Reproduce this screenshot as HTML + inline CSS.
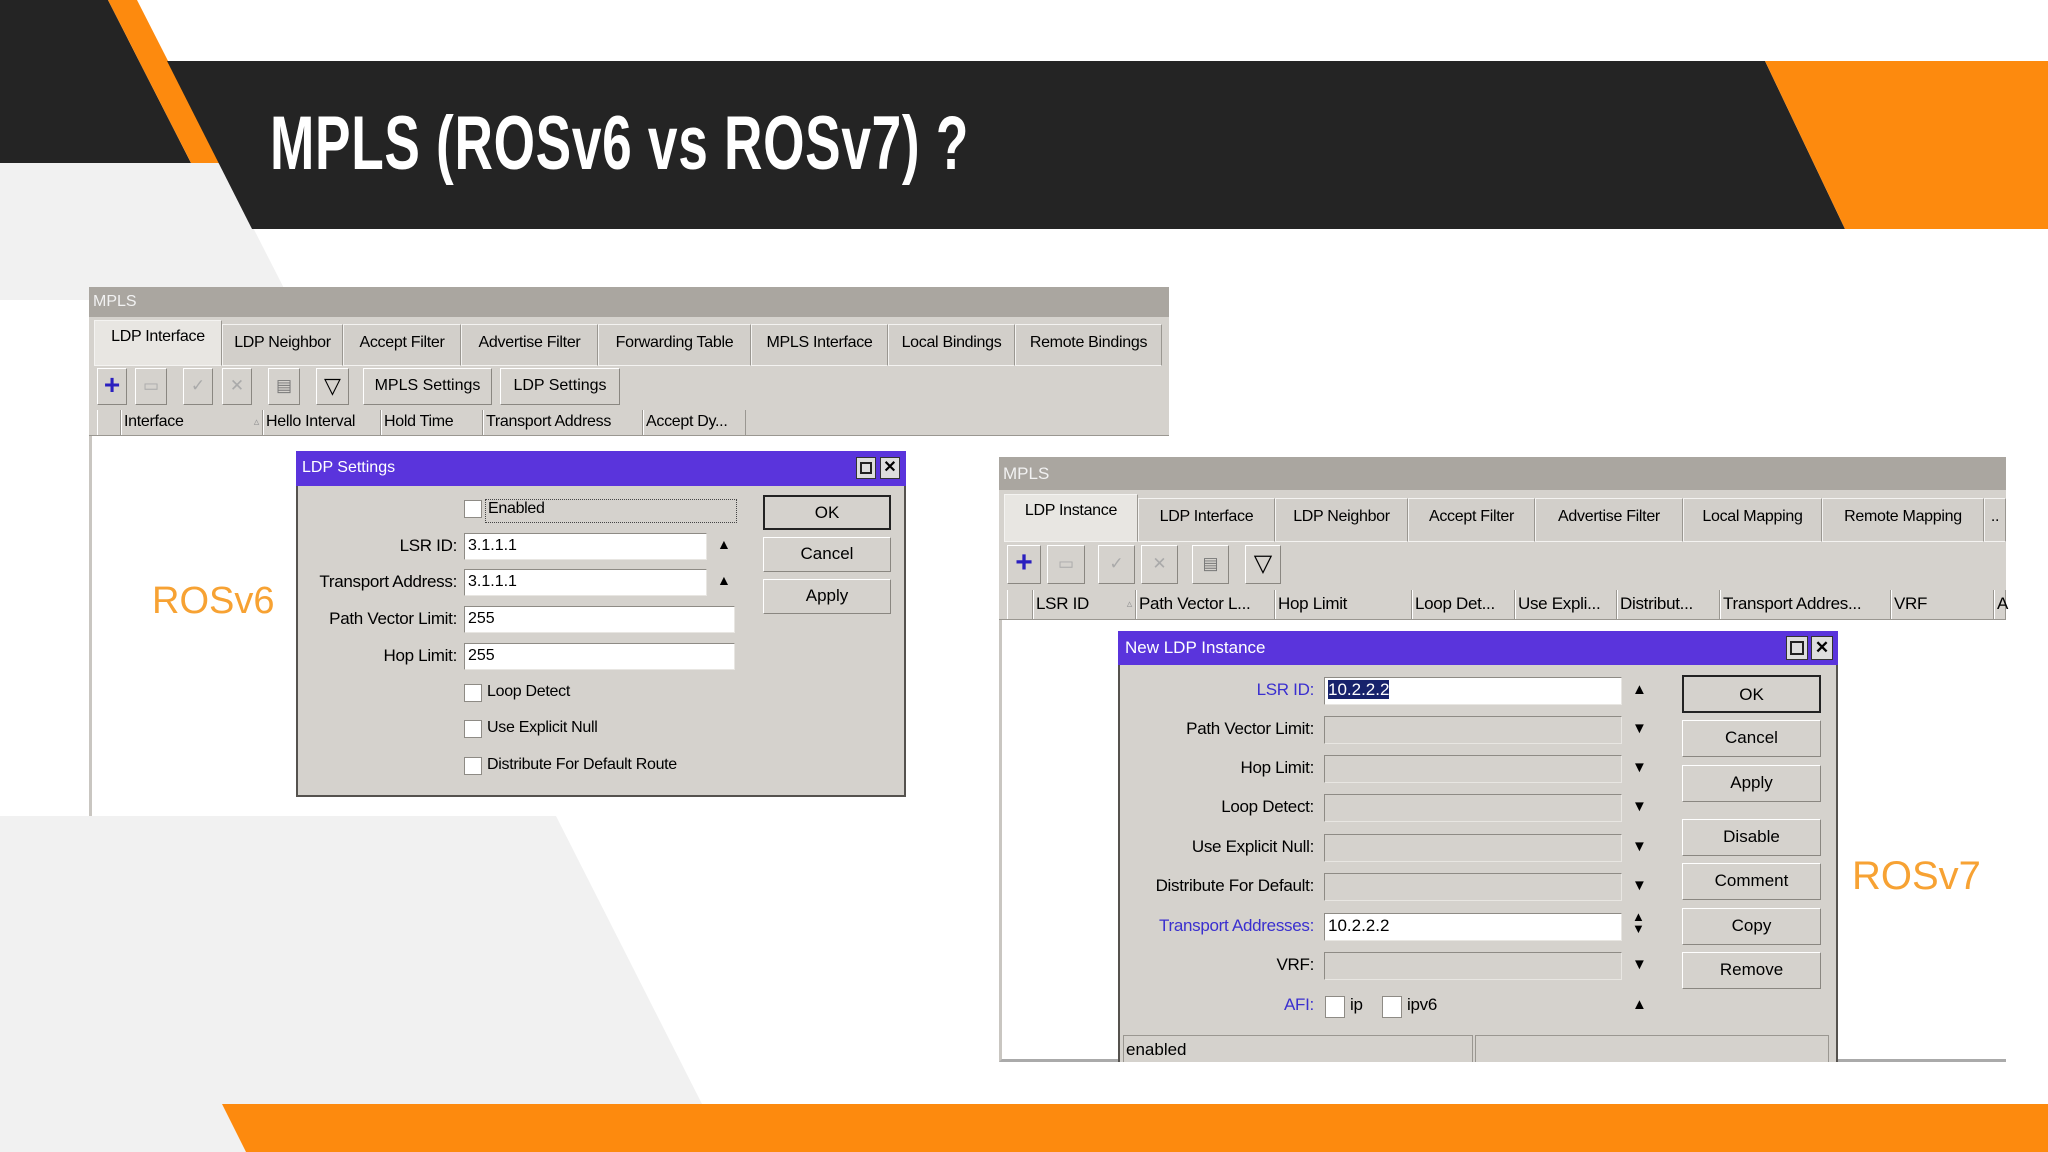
<!DOCTYPE html>
<html><head><meta charset="utf-8"><style>
*{margin:0;padding:0;box-sizing:border-box}
body{width:2048px;height:1152px;position:relative;overflow:hidden;background:#fff;font-family:"Liberation Sans",sans-serif;}
.a{position:absolute}
.win{background:#d5d2cd;font-size:16px;color:#000;white-space:nowrap}
.t{position:absolute;font-size:16px;color:#000;white-space:nowrap;letter-spacing:-0.3px}
.tab{position:absolute;border:1px solid #f4f3f1;border-right-color:#9a9791;background:#d2cfca;text-align:center;font-size:16px;letter-spacing:-0.3px;padding-top:9px}
.tab.act{background:#e8e6e2;padding-top:7px}
.btn{position:absolute;border:1px solid #fff;border-right-color:#8a8781;border-bottom-color:#8a8781;background:#d5d2cd;text-align:center;font-size:17px}
.inp{position:absolute;background:#fff;border:1px solid #8e8b85;border-right-color:#e8e6e2;border-bottom-color:#e8e6e2;font-size:16px;padding-left:3px;line-height:24px}
.inpg{background:#d5d2cd}
.hd{position:absolute;border-left:1px solid #fff;border-right:1px solid #9a9791;font-size:16px;padding-left:2px;line-height:24px;letter-spacing:-0.3px}
.cb{position:absolute;width:18px;height:18px;background:#fff;border:1px solid #8e8b85}
.lbl{position:absolute;text-align:right;font-size:17px;letter-spacing:-0.3px}
.blue{color:#3a2fcf}
</style></head><body>
<svg class="a" style="left:0;top:0" width="2048" height="1152">
<polygon points="0,163 220,163 290,300 0,300" fill="#f1f1f1"/>
<polygon points="0,816 556,816 702,1104 0,1104" fill="#f1f1f1"/>
<polygon points="0,1104 222,1104 246,1152 0,1152" fill="#f1f1f1"/>
<polygon points="0,0 108,0 191,163 0,163" fill="#242424"/>
<polygon points="108,0 137,0 220,163 191,163" fill="#fd8a0e"/>
<polygon points="167,61 1765,61 1845,229 252,229" fill="#242424"/>
<polygon points="1765,61 2048,61 2048,229 1845,229" fill="#fd8a0e"/>
<polygon points="222,1104 2048,1104 2048,1152 246,1152" fill="#fd8a0e"/>
</svg>
<div class="a" style="left:270px;top:100px;font-size:76px;font-weight:bold;color:#fff;transform:scaleX(0.70);transform-origin:left top;white-space:nowrap;letter-spacing:1px">MPLS (ROSv6 vs ROSv7) ?</div>

<!-- ROSv6 window -->
<div class="a win" style="left:89px;top:287px;width:1080px;height:529px;background:#fff;border-left:3px solid #c9c6c1">
</div>
<div class="a" style="left:89px;top:287px;width:1080px;height:30px;background:#aaa6a0;color:#f2f2f2;font-size:16px;padding:6px 4px">MPLS</div>
<div class="a" style="left:89px;top:317px;width:1080px;height:119px;background:#d5d2cd;border-bottom:1px solid #9a9791"></div>
<div class="tab act" style="left:94px;top:320px;width:128px;height:46px">LDP Interface</div>
<div class="tab" style="left:222px;top:324px;width:121px;height:42px">LDP Neighbor</div>
<div class="tab" style="left:343px;top:324px;width:118px;height:42px">Accept Filter</div>
<div class="tab" style="left:461px;top:324px;width:137px;height:42px">Advertise Filter</div>
<div class="tab" style="left:598px;top:324px;width:153px;height:42px">Forwarding Table</div>
<div class="tab" style="left:751px;top:324px;width:137px;height:42px">MPLS Interface</div>
<div class="tab" style="left:888px;top:324px;width:127px;height:42px">Local Bindings</div>
<div class="tab" style="left:1015px;top:324px;width:147px;height:42px">Remote Bindings</div>
<div class="btn" style="left:97px;top:368px;width:30px;height:37px;color:#2a1fbf;font-size:28px;font-weight:bold;line-height:32px">+</div>
<div class="btn" style="left:135px;top:368px;width:32px;height:37px;color:#aaa;line-height:34px">▭</div>
<div class="btn" style="left:183px;top:368px;width:30px;height:37px;color:#aaa;line-height:34px">✓</div>
<div class="btn" style="left:222px;top:368px;width:30px;height:37px;color:#aaa;line-height:34px">✕</div>
<div class="btn" style="left:268px;top:368px;width:32px;height:37px;color:#777;line-height:34px">▤</div>
<div class="btn" style="left:316px;top:368px;width:33px;height:37px;line-height:34px;font-size:22px">▽</div>
<div class="btn" style="left:363px;top:368px;width:129px;height:37px;line-height:34px;font-size:16px">MPLS Settings</div>
<div class="btn" style="left:500px;top:368px;width:120px;height:37px;line-height:34px;font-size:16px">LDP Settings</div>
<div class="hd" style="left:97px;top:410px;width:24px;height:25px"></div>
<div class="hd" style="left:121px;top:410px;width:142px;height:25px">Interface<span style="float:right;color:#999;font-size:11px;padding-right:3px">▵</span></div>
<div class="hd" style="left:263px;top:410px;width:118px;height:25px">Hello Interval</div>
<div class="hd" style="left:381px;top:410px;width:102px;height:25px">Hold Time</div>
<div class="hd" style="left:483px;top:410px;width:160px;height:25px">Transport Address</div>
<div class="hd" style="left:643px;top:410px;width:103px;height:25px">Accept Dy...</div>
<div class="a" style="left:152px;top:580px;font-size:38px;color:#f7a233">ROSv6</div>

<!-- LDP Settings dialog -->
<div class="a win" style="left:296px;top:451px;width:610px;height:346px;border:2px solid #55524e;border-top:none"></div>
<div class="a" style="left:296px;top:451px;width:610px;height:35px;background:#5a34dc;color:#fff;font-size:16px;padding:8px 6px">LDP Settings
<span style="position:absolute;right:30px;top:6px;width:20px;height:22px;border:1px solid #333;background:#ddd"><span style="position:absolute;left:3px;top:4px;width:12px;height:12px;border:2px solid #222"></span></span>
<span style="position:absolute;right:6px;top:6px;width:20px;height:22px;border:1px solid #333;background:#ddd;color:#000;font-weight:bold;text-align:center;line-height:20px">✕</span></div>
<div class="cb" style="left:464px;top:500px"></div><div class="t" style="left:485px;top:499px;border:1px dotted #444;width:252px;height:24px;padding-left:2px">Enabled</div>
<div class="lbl" style="left:296px;top:536px;width:161px">LSR ID:</div><div class="inp" style="left:464px;top:533px;width:243px;height:27px">3.1.1.1</div><div class="t" style="left:717px;top:536px;font-size:14px">▲</div>
<div class="lbl" style="left:296px;top:572px;width:161px">Transport Address:</div><div class="inp" style="left:464px;top:569px;width:243px;height:27px">3.1.1.1</div><div class="t" style="left:717px;top:572px;font-size:14px">▲</div>
<div class="lbl" style="left:296px;top:609px;width:161px">Path Vector Limit:</div><div class="inp" style="left:464px;top:606px;width:271px;height:27px">255</div>
<div class="lbl" style="left:296px;top:646px;width:161px">Hop Limit:</div><div class="inp" style="left:464px;top:643px;width:271px;height:27px">255</div>
<div class="cb" style="left:464px;top:684px"></div><div class="t" style="left:487px;top:683px">Loop Detect</div>
<div class="cb" style="left:464px;top:720px"></div><div class="t" style="left:487px;top:719px">Use Explicit Null</div>
<div class="cb" style="left:464px;top:757px"></div><div class="t" style="left:487px;top:756px">Distribute For Default Route</div>
<div class="btn" style="left:763px;top:495px;width:128px;height:35px;line-height:32px;border:2px solid #222">OK</div>
<div class="btn" style="left:763px;top:537px;width:128px;height:35px;line-height:32px">Cancel</div>
<div class="btn" style="left:763px;top:579px;width:128px;height:35px;line-height:32px">Apply</div>

<!-- ROSv7 window -->
<div class="a" style="left:999px;top:457px;width:1007px;height:605px;background:#fff;border-left:3px solid #c9c6c1;border-bottom:3px solid #aaa"></div>
<div class="a" style="left:999px;top:457px;width:1007px;height:33px;background:#aaa6a0;color:#f2f2f2;font-size:17px;padding:7px 4px">MPLS</div>
<div class="a" style="left:999px;top:490px;width:1007px;height:130px;background:#d5d2cd;border-bottom:1px solid #9a9791"></div>
<div class="tab act" style="left:1004px;top:494px;width:134px;height:48px">LDP Instance</div>
<div class="tab" style="left:1138px;top:498px;width:137px;height:44px">LDP Interface</div>
<div class="tab" style="left:1275px;top:498px;width:133px;height:44px">LDP Neighbor</div>
<div class="tab" style="left:1408px;top:498px;width:127px;height:44px">Accept Filter</div>
<div class="tab" style="left:1535px;top:498px;width:148px;height:44px">Advertise Filter</div>
<div class="tab" style="left:1683px;top:498px;width:139px;height:44px">Local Mapping</div>
<div class="tab" style="left:1822px;top:498px;width:162px;height:44px">Remote Mapping</div>
<div class="tab" style="left:1984px;top:498px;width:22px;height:44px">..</div>
<div class="btn" style="left:1007px;top:545px;width:34px;height:39px;color:#2a1fbf;font-size:30px;font-weight:bold;line-height:34px">+</div>
<div class="btn" style="left:1047px;top:545px;width:38px;height:39px;color:#aaa;line-height:36px">▭</div>
<div class="btn" style="left:1098px;top:545px;width:37px;height:39px;color:#aaa;line-height:36px">✓</div>
<div class="btn" style="left:1141px;top:545px;width:37px;height:39px;color:#aaa;line-height:36px">✕</div>
<div class="btn" style="left:1192px;top:545px;width:37px;height:39px;color:#777;line-height:36px">▤</div>
<div class="btn" style="left:1245px;top:545px;width:36px;height:39px;line-height:36px;font-size:24px">▽</div>
<div class="hd" style="left:1007px;top:590px;width:26px;height:29px"></div>
<div class="hd" style="left:1033px;top:590px;width:103px;height:29px;line-height:28px;font-size:17px">LSR ID<span style="float:right;color:#999;font-size:11px;padding-right:3px">▵</span></div>
<div class="hd" style="left:1136px;top:590px;width:139px;height:29px;line-height:28px;font-size:17px">Path Vector L...</div>
<div class="hd" style="left:1275px;top:590px;width:137px;height:29px;line-height:28px;font-size:17px">Hop Limit</div>
<div class="hd" style="left:1412px;top:590px;width:103px;height:29px;line-height:28px;font-size:17px">Loop Det...</div>
<div class="hd" style="left:1515px;top:590px;width:102px;height:29px;line-height:28px;font-size:17px">Use Expli...</div>
<div class="hd" style="left:1617px;top:590px;width:103px;height:29px;line-height:28px;font-size:17px">Distribut...</div>
<div class="hd" style="left:1720px;top:590px;width:171px;height:29px;line-height:28px;font-size:17px">Transport Addres...</div>
<div class="hd" style="left:1891px;top:590px;width:103px;height:29px;line-height:28px;font-size:17px">VRF</div>
<div class="hd" style="left:1994px;top:590px;width:12px;height:29px;line-height:28px;font-size:17px">A</div>
<div class="a" style="left:1852px;top:854px;font-size:40px;color:#f7a233">ROSv7</div>

<!-- New LDP Instance -->
<div class="a win" style="left:1118px;top:631px;width:720px;height:431px;border:2px solid #55524e;border-top:none;border-bottom:none"></div>
<div class="a" style="left:1118px;top:631px;width:720px;height:34px;background:#5a34dc;color:#fff;font-size:17px;padding:7px 7px">New LDP Instance
<span style="position:absolute;right:30px;top:5px;width:22px;height:24px;border:1px solid #333;background:#ddd"><span style="position:absolute;left:3px;top:4px;width:14px;height:14px;border:2px solid #222"></span></span>
<span style="position:absolute;right:5px;top:5px;width:22px;height:24px;border:1px solid #333;background:#ddd;color:#000;font-weight:bold;text-align:center;line-height:22px">✕</span></div>
<div class="lbl blue" style="left:1118px;top:680px;width:196px">LSR ID:</div><div class="inp" style="left:1324px;top:677px;width:298px;height:28px;font-size:17px"><span style="background:#17226b;color:#fff">10.2.2.2</span></div><div class="t" style="left:1632px;top:681px;font-size:15px">▲</div>
<div class="lbl" style="left:1118px;top:719px;width:196px">Path Vector Limit:</div><div class="inp inpg" style="left:1324px;top:716px;width:298px;height:28px"></div><div class="t" style="left:1632px;top:720px;font-size:15px">▼</div>
<div class="lbl" style="left:1118px;top:758px;width:196px">Hop Limit:</div><div class="inp inpg" style="left:1324px;top:755px;width:298px;height:28px"></div><div class="t" style="left:1632px;top:759px;font-size:15px">▼</div>
<div class="lbl" style="left:1118px;top:797px;width:196px">Loop Detect:</div><div class="inp inpg" style="left:1324px;top:794px;width:298px;height:28px"></div><div class="t" style="left:1632px;top:798px;font-size:15px">▼</div>
<div class="lbl" style="left:1118px;top:837px;width:196px">Use Explicit Null:</div><div class="inp inpg" style="left:1324px;top:834px;width:298px;height:28px"></div><div class="t" style="left:1632px;top:838px;font-size:15px">▼</div>
<div class="lbl" style="left:1118px;top:876px;width:196px">Distribute For Default:</div><div class="inp inpg" style="left:1324px;top:873px;width:298px;height:28px"></div><div class="t" style="left:1632px;top:877px;font-size:15px">▼</div>
<div class="lbl blue" style="left:1118px;top:916px;width:196px">Transport Addresses:</div><div class="inp" style="left:1324px;top:913px;width:298px;height:28px;font-size:17px">10.2.2.2</div><div class="t" style="left:1632px;top:911px;font-size:13px;line-height:12px">▲<br>▼</div>
<div class="lbl" style="left:1118px;top:955px;width:196px">VRF:</div><div class="inp inpg" style="left:1324px;top:952px;width:298px;height:28px"></div><div class="t" style="left:1632px;top:956px;font-size:15px">▼</div>
<div class="lbl blue" style="left:1118px;top:995px;width:196px">AFI:</div>
<div class="cb" style="left:1325px;top:996px;width:20px;height:22px"></div><div class="t" style="left:1350px;top:995px;font-size:17px">ip</div>
<div class="cb" style="left:1382px;top:996px;width:20px;height:22px"></div><div class="t" style="left:1407px;top:995px;font-size:17px">ipv6</div>
<div class="t" style="left:1632px;top:996px;font-size:15px">▲</div>
<div class="btn" style="left:1682px;top:675px;width:139px;height:38px;line-height:35px;border:2px solid #222">OK</div>
<div class="btn" style="left:1682px;top:720px;width:139px;height:37px;line-height:34px">Cancel</div>
<div class="btn" style="left:1682px;top:765px;width:139px;height:37px;line-height:34px">Apply</div>
<div class="btn" style="left:1682px;top:819px;width:139px;height:37px;line-height:34px">Disable</div>
<div class="btn" style="left:1682px;top:863px;width:139px;height:37px;line-height:34px">Comment</div>
<div class="btn" style="left:1682px;top:908px;width:139px;height:37px;line-height:34px">Copy</div>
<div class="btn" style="left:1682px;top:952px;width:139px;height:37px;line-height:34px">Remove</div>
<div class="a" style="left:1123px;top:1035px;width:350px;height:27px;border:1px solid #9a9791;border-bottom:none;font-size:17px;padding:4px 2px">enabled</div>
<div class="a" style="left:1475px;top:1035px;width:354px;height:27px;border:1px solid #9a9791;border-bottom:none"></div>
</body></html>
